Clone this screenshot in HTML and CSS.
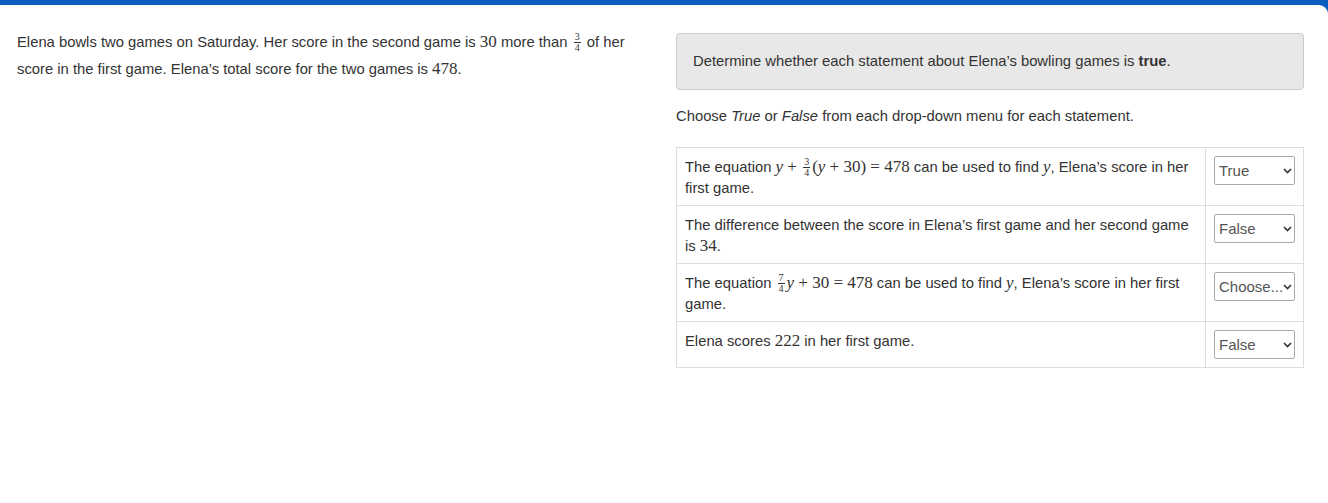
FILE: index.html
```html
<!DOCTYPE html>
<html>
<head>
<meta charset="utf-8">
<link rel="stylesheet" href="styles.css">
</head>
<body>
<div class="page">
  <div class="content">
    <div class="stem">
      <p class="stem-text">Elena bowls two games on Saturday. Her score in the second game is <span class="m">30</span> more than <span class="frac"><span class="num">3</span><span class="den">4</span></span> of her score in the first game. Elena’s total score for the two games is <span class="m">478</span>.</p>
    </div>
    <div class="task">
      <div class="prompt">Determine whether each statement about Elena’s bowling games is <b>true</b>.</div>
      <p class="instr">Choose <i>True</i> or <i>False</i> from each drop-down menu for each statement.</p>
      <table class="stmts">
        <tr>
          <td class="txt">The equation <span class="m"><i>y</i> + <span class="frac"><span class="num">3</span><span class="den">4</span></span>(<i>y</i> + 30) = 478</span> can be used to find <span class="m"><i>y</i></span>, Elena’s score in her first game.</td>
          <td class="sel"><div class="selwrap"><select><option>True</option></select><svg class="chev" width="9" height="6" viewBox="0 0 9 6"><path d="M1 1l3.5 3.5L8 1" fill="none" stroke="#333" stroke-width="1.6"/></svg></div></td>
        </tr>
        <tr>
          <td class="txt">The difference between the score in Elena’s first game and her second game is <span class="m">34</span>.</td>
          <td class="sel"><div class="selwrap"><select><option>False</option></select><svg class="chev" width="9" height="6" viewBox="0 0 9 6"><path d="M1 1l3.5 3.5L8 1" fill="none" stroke="#333" stroke-width="1.6"/></svg></div></td>
        </tr>
        <tr>
          <td class="txt">The equation <span class="m"><span class="frac"><span class="num">7</span><span class="den">4</span></span><i>y</i> + 30 = 478</span> can be used to find <span class="m"><i>y</i></span>, Elena’s score in her first game.</td>
          <td class="sel"><div class="selwrap"><select><option>Choose...</option></select><svg class="chev" width="9" height="6" viewBox="0 0 9 6"><path d="M1 1l3.5 3.5L8 1" fill="none" stroke="#333" stroke-width="1.6"/></svg></div></td>
        </tr>
        <tr>
          <td class="txt">Elena scores <span class="m">222</span> in her first game.</td>
          <td class="sel"><div class="selwrap"><select><option>False</option></select><svg class="chev" width="9" height="6" viewBox="0 0 9 6"><path d="M1 1l3.5 3.5L8 1" fill="none" stroke="#333" stroke-width="1.6"/></svg></div></td>
        </tr>
      </table>
    </div>
  </div>
</div>
</body>
</html>
```

FILE: styles.css
```css
html, body {
  margin: 0;
  padding: 0;
  height: 100%;
}
body {
  font-family: "Liberation Sans", Arial, sans-serif;
  font-size: 14.8px;
  line-height: 20.5px;
  color: #333;
  background: #fff;
}
.page {
  background: #0b5ebd;
  min-height: 100%;
  padding-top: 5px;
  box-sizing: border-box;
}
.content {
  background: #fff;
  border-top-right-radius: 9px;
  min-height: calc(100vh - 5px);
  display: flex;
}
.stem {
  width: 664px;
  box-sizing: border-box;
  padding: 24px 22px 0 17px;
}
.stem-text {
  margin: 0;
  line-height: 27px;
}
.task {
  width: 664px;
  box-sizing: border-box;
  padding: 28px 24px 0 12px;
}
.prompt {
  background: #e8e8e8;
  border: 1px solid #ccc;
  border-radius: 4px;
  padding: 17px 16px 17px 16px;
  line-height: 21px;
}
.instr {
  margin: 16px 0 20px 0;
  line-height: 21px;
}
.m {
  font-family: "Liberation Serif", "Times New Roman", serif;
  font-size: 17px;
  line-height: 0;
  white-space: nowrap;
}
.m i {
  font-style: italic;
}
.frac {
  display: inline-flex;
  flex-direction: column;
  align-items: center;
  vertical-align: 7px;
  font-family: "Liberation Serif", serif;
  font-size: 10px;
  line-height: 8px;
  margin: 0 2px;
}
.frac .num {
  border-bottom: 1px solid #333;
  padding: 0 1px 1px;
  line-height: 8px;
}
.frac .den {
  line-height: 9px;
}
.stmts {
  width: 628px;
  border-collapse: collapse;
}
.stmts td {
  border: 1px solid #ddd;
  padding: 9px 8px 7px;
  vertical-align: top;
}
.stmts td.sel {
  width: 81px;
  padding: 8px;
}
.selwrap {
  position: relative;
  width: 81px;
  height: 29px;
}
select {
  -webkit-appearance: none;
  appearance: none;
  width: 81px;
  height: 29px;
  box-sizing: border-box;
  font-family: "Liberation Sans", Arial, sans-serif;
  font-size: 15px;
  color: #555;
  background: #fff;
  border: 1px solid #aaa;
  border-radius: 2px;
  padding: 0 0 0 4px;
  margin: 0;
  display: block;
}
.chev {
  position: absolute;
  right: 3px;
  top: 12px;
  pointer-events: none;
}
```
